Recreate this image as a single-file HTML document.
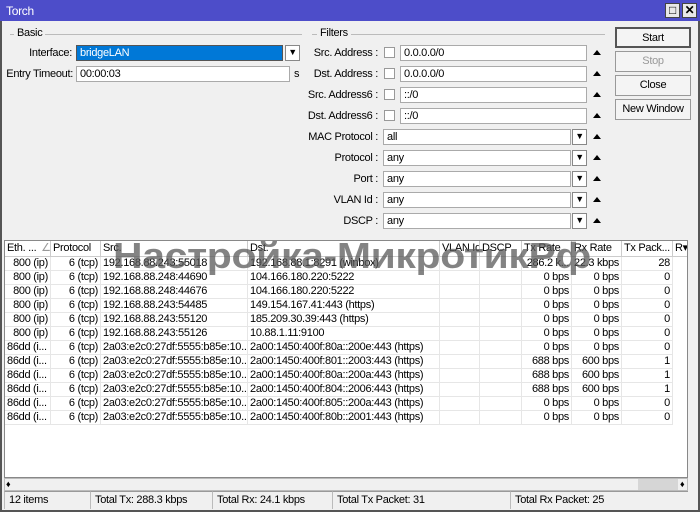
<!DOCTYPE html>
<html><head><meta charset="utf-8">
<style>
*{box-sizing:border-box;margin:0;padding:0}
body{width:700px;height:512px;overflow:hidden;background:#f0f0f0;font-family:"Liberation Sans",sans-serif;font-size:11px;color:#000;position:relative;letter-spacing:-0.3px}
.abs{position:absolute}
#title{left:0;top:0;width:700px;height:21px;background:#4d4dc9;color:#fff;font-size:12px;padding:4px 0 0 6px}
#frame{left:0;top:21px;width:700px;height:491px;border-left:2px solid #555;border-right:2px solid #555;border-bottom:2px solid #555}
.tb{top:3px;width:15px;height:15px;background:#e8e8e8;border:1px solid #444;font-size:12px;line-height:13px;text-align:center;color:#000;font-weight:bold}
.grp{border-top:1px solid #bbb;height:1px}
.leg{background:#f0f0f0;padding:0 3px;top:27px}
.lbl{text-align:right}
.inp{background:#fff;border:1px solid #aaa;height:16px;padding:1px 3px;line-height:13px}
.cb{width:11px;height:11px;background:#fff;border:1px solid #999}
.dd{width:15px;height:16px;background:#fff;border:1px solid #888;font-size:9px;text-align:center;line-height:13px}
.up{width:0;height:0;border-left:4px solid transparent;border-right:4px solid transparent;border-bottom:5px solid #000}
.btn{left:615px;width:76px;height:21px;border:1px solid #999;background:#f4f4f4;text-align:center;line-height:19px;font-size:11px}
#tbl{left:4px;top:240px;width:684px;height:238px;background:#fff;border:1px solid #888}
.row{position:absolute;left:0;height:14px;width:668px;line-height:13px;border-bottom:1px solid #e6e6e6}
.row span,.hdr span{position:absolute;top:0;white-space:nowrap;overflow:hidden;padding:0 2px}
.hdr{position:absolute;left:0;top:0;height:16px;width:682px;background:#fff;line-height:15px;border-bottom:1px solid #ccc}
.hdr span{border-right:1px solid #ccc;height:16px}
.r{text-align:right}
.cell{border-right:1px solid #e6e6e6;height:14px}
.st{position:absolute;top:491px;height:18px;border-top:1px solid #999;border-left:1px solid #bbb;padding-left:4px;line-height:16px}
</style></head><body>
<div id="title" class="abs">Torch</div>
<div class="abs tb" style="left:665px">□</div>
<div class="abs tb" style="left:682px">✕</div>
<div id="frame" class="abs"></div>

<div class="abs grp" style="left:10px;top:34px;width:292px"></div>
<div class="abs leg" style="left:14px">Basic</div>
<div class="abs lbl" style="left:10px;top:47px;width:62px">Interface:</div>
<div class="abs inp" style="left:76px;top:45px;width:207px;background:#0078d7;color:#fff;border-color:#555">bridgeLAN</div>
<div class="abs dd" style="left:285px;top:45px">▼</div>
<div class="abs lbl" style="left:5px;top:68px;width:68px">Entry Timeout:</div>
<div class="abs inp" style="left:76px;top:66px;width:214px">00:00:03</div>
<div class="abs" style="left:294px;top:68px">s</div>

<div class="abs grp" style="left:312px;top:34px;width:293px"></div>
<div class="abs leg" style="left:317px">Filters</div>

<div class="abs lbl" style="left:300px;top:47px;width:78px">Src. Address :</div>
<div class="abs cb" style="left:384px;top:47px"></div>
<div class="abs inp" style="left:400px;top:45px;width:187px">0.0.0.0/0</div>
<div class="abs up" style="left:593px;top:50px"></div>
<div class="abs lbl" style="left:300px;top:68px;width:78px">Dst. Address :</div>
<div class="abs cb" style="left:384px;top:68px"></div>
<div class="abs inp" style="left:400px;top:66px;width:187px">0.0.0.0/0</div>
<div class="abs up" style="left:593px;top:71px"></div>
<div class="abs lbl" style="left:300px;top:89px;width:78px">Src. Address6 :</div>
<div class="abs cb" style="left:384px;top:89px"></div>
<div class="abs inp" style="left:400px;top:87px;width:187px">::/0</div>
<div class="abs up" style="left:593px;top:92px"></div>
<div class="abs lbl" style="left:300px;top:110px;width:78px">Dst. Address6 :</div>
<div class="abs cb" style="left:384px;top:110px"></div>
<div class="abs inp" style="left:400px;top:108px;width:187px">::/0</div>
<div class="abs up" style="left:593px;top:113px"></div>

<div class="abs lbl" style="left:300px;top:131px;width:78px">MAC Protocol :</div>
<div class="abs inp" style="left:383px;top:129px;width:188px">all</div>
<div class="abs dd" style="left:572px;top:129px">▼</div>
<div class="abs up" style="left:593px;top:134px"></div>
<div class="abs lbl" style="left:300px;top:152px;width:78px">Protocol :</div>
<div class="abs inp" style="left:383px;top:150px;width:188px">any</div>
<div class="abs dd" style="left:572px;top:150px">▼</div>
<div class="abs up" style="left:593px;top:155px"></div>
<div class="abs lbl" style="left:300px;top:173px;width:78px">Port :</div>
<div class="abs inp" style="left:383px;top:171px;width:188px">any</div>
<div class="abs dd" style="left:572px;top:171px">▼</div>
<div class="abs up" style="left:593px;top:176px"></div>
<div class="abs lbl" style="left:300px;top:194px;width:78px">VLAN Id :</div>
<div class="abs inp" style="left:383px;top:192px;width:188px">any</div>
<div class="abs dd" style="left:572px;top:192px">▼</div>
<div class="abs up" style="left:593px;top:197px"></div>
<div class="abs lbl" style="left:300px;top:215px;width:78px">DSCP :</div>
<div class="abs inp" style="left:383px;top:213px;width:188px">any</div>
<div class="abs dd" style="left:572px;top:213px">▼</div>
<div class="abs up" style="left:593px;top:218px"></div>

<div class="abs btn" style="top:27px;border:2px solid #555">Start</div>
<div class="abs btn" style="top:51px;color:#999">Stop</div>
<div class="abs btn" style="top:75px">Close</div>
<div class="abs btn" style="top:99px">New Window</div>

<div id="tbl" class="abs">
<div class="hdr">
<span style="left:0;width:46px">Eth. ... <span style="position:static;color:#999;border:0">∠</span></span>
<span style="left:46px;width:50px">Protocol</span>
<span style="left:96px;width:147px">Src.</span>
<span style="left:243px;width:192px">Dst.</span>
<span style="left:435px;width:40px">VLAN Id</span>
<span style="left:475px;width:42px">DSCP</span>
<span style="left:517px;width:50px">Tx Rate</span>
<span style="left:567px;width:50px">Rx Rate</span>
<span style="left:617px;width:51px">Tx Pack...</span>
<span style="left:668px;width:14px;border:0">R▾</span>
</div>
<div id="rows"></div>
</div>
<script>
var d=[
["800 (ip)","192.168.88.243:55018","192.168.88.1:8291 (winbox)","286.2 k...","22.3 kbps","28"],
["800 (ip)","192.168.88.248:44690","104.166.180.220:5222","0 bps","0 bps","0"],
["800 (ip)","192.168.88.248:44676","104.166.180.220:5222","0 bps","0 bps","0"],
["800 (ip)","192.168.88.243:54485","149.154.167.41:443 (https)","0 bps","0 bps","0"],
["800 (ip)","192.168.88.243:55120","185.209.30.39:443 (https)","0 bps","0 bps","0"],
["800 (ip)","192.168.88.243:55126","10.88.1.11:9100","0 bps","0 bps","0"],
["86dd (i...","2a03:e2c0:27df:5555:b85e:10...","2a00:1450:400f:80a::200e:443 (https)","0 bps","0 bps","0"],
["86dd (i...","2a03:e2c0:27df:5555:b85e:10...","2a00:1450:400f:801::2003:443 (https)","688 bps","600 bps","1"],
["86dd (i...","2a03:e2c0:27df:5555:b85e:10...","2a00:1450:400f:80a::200a:443 (https)","688 bps","600 bps","1"],
["86dd (i...","2a03:e2c0:27df:5555:b85e:10...","2a00:1450:400f:804::2006:443 (https)","688 bps","600 bps","1"],
["86dd (i...","2a03:e2c0:27df:5555:b85e:10...","2a00:1450:400f:805::200a:443 (https)","0 bps","0 bps","0"],
["86dd (i...","2a03:e2c0:27df:5555:b85e:10...","2a00:1450:400f:80b::2001:443 (https)","0 bps","0 bps","0"]];
var h="";
d.forEach(function(r,i){
var e=r[0].indexOf("800")==0;
h+='<div class="row" style="top:'+(16+i*14)+'px">'+
'<span class="cell '+(e?'r':'')+'" style="left:0;width:46px">'+r[0]+'</span>'+
'<span class="cell r" style="left:46px;width:50px">6 (tcp)</span>'+
'<span class="cell" style="left:96px;width:147px">'+r[1]+'</span>'+
'<span class="cell" style="left:243px;width:192px">'+r[2]+'</span>'+
'<span class="cell" style="left:435px;width:40px"></span>'+
'<span class="cell" style="left:475px;width:42px"></span>'+
'<span class="cell r" style="left:517px;width:50px">'+r[3]+'</span>'+
'<span class="cell r" style="left:567px;width:50px">'+r[4]+'</span>'+
'<span class="cell r" style="left:617px;width:51px">'+r[5]+'</span></div>';});
document.getElementById("rows").innerHTML=h;
</script>
<svg class="abs" style="left:0;top:225px" width="700" height="50"><text x="113" y="43" font-family="Liberation Sans,sans-serif" font-size="36" font-weight="bold" fill="#5a5a5a" fill-opacity="0.75" textLength="478" lengthAdjust="spacingAndGlyphs">Настройка-МикротикРф</text></svg>

<div class="abs" style="left:4px;top:478px;width:684px;height:13px;background:#f0f0f0;border:1px solid #bbb"></div>
<div class="abs" style="left:6px;top:479px;font-size:9px">♦</div>
<div class="abs" style="left:638px;top:479px;width:40px;height:11px;background:#d6d6d6"></div>
<div class="abs" style="left:680px;top:479px;font-size:9px">♦</div>

<div class="st" style="left:4px;width:86px">12 items</div>
<div class="st" style="left:90px;width:122px">Total Tx: 288.3 kbps</div>
<div class="st" style="left:212px;width:120px">Total Rx: 24.1 kbps</div>
<div class="st" style="left:332px;width:178px">Total Tx Packet: 31</div>
<div class="st" style="left:510px;width:178px">Total Rx Packet: 25</div>
</body></html>
